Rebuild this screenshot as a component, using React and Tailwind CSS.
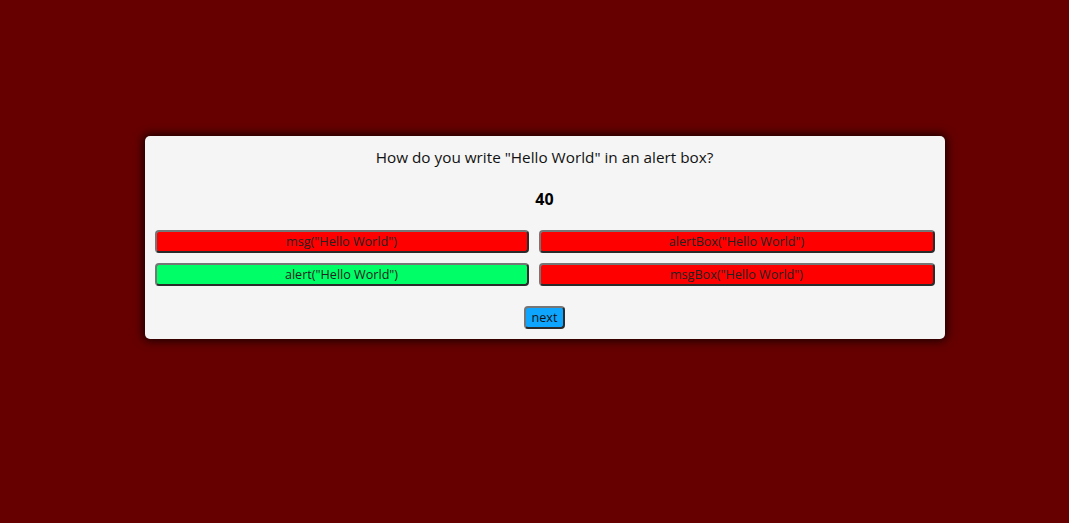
import React from "react";

const options = [
  { text: 'msg("Hello World")', correct: false },
  { text: 'alertBox("Hello World")', correct: false },
  { text: 'alert("Hello World")', correct: true },
  { text: 'msgBox("Hello World")', correct: false },
];

const App = () => {
  return (
    <div
      className="min-h-screen w-full bg-[#660000] flex justify-center pt-[136px] pl-[20px]"
      style={{ fontFamily: '"Open Sans", "Noto Sans", sans-serif' }}
    >
      <div className="w-[800px] h-[203px] bg-[#f5f5f5] rounded-[5px] shadow-[0_0_10px_2px_rgba(0,0,0,0.75)] px-[10px] pt-[10px] flex flex-col items-center">
        {/* question */}
        <div className="text-[15.3px] leading-[22px] text-[#111]">
          How do you write "Hello World" in an alert box?
        </div>
        <div className="text-[16px] leading-[22px] font-bold text-black mt-[20px]">
          40
        </div>

        {/* answers */}
        <div className="grid grid-cols-[374px_396px] gap-[10px] mt-[20px]">
          {options.map((opt, i) => (
            <button
              key={i}
              className={`h-[23px] pt-[2px] rounded-[4px] border-2 border-t-[#767676] border-l-[#767676] border-b-[#2b2b2b] border-r-[#2b2b2b] text-[12.6px] leading-none text-[#222] ${
                opt.correct ? "bg-[#00ff66]" : "bg-[#ff0000]"
              }`}
            >
              {opt.text}
            </button>
          ))}
        </div>

        <button className="mt-[20px] h-[23px] pt-[2px] px-[6px] rounded-[4px] border-2 border-t-[#767676] border-l-[#767676] border-b-[#2b2b2b] border-r-[#2b2b2b] bg-[#0ea5ff] text-[12.6px] leading-none text-[#111]">
          next
        </button>
      </div>
    </div>
  );
};

export default App;
